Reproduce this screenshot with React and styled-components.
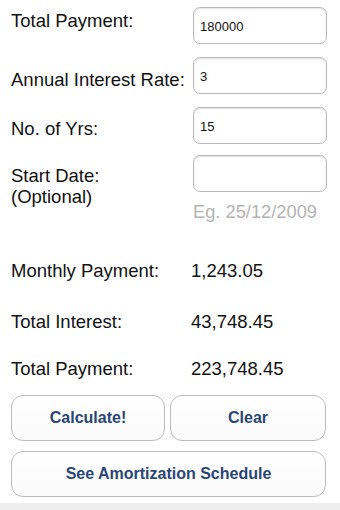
import styled, { createGlobalStyle } from 'styled-components';

const GlobalStyle = createGlobalStyle`
  html, body {
    margin: 0;
    padding: 0;
    background: #ffffff;
  }
  * {
    box-sizing: border-box;
  }
`;

const App = () => {
  return (
    <Screen>
      <GlobalStyle />
      <Form>
        <Field $labelTop={3}>
          <Label>Total Payment:</Label>
          <InputBox>
            <Input defaultValue="180000" />
          </InputBox>
        </Field>
        <Field $gap={13} $labelTop={12}>
          <Label>Annual Interest Rate:</Label>
          <InputBox>
            <Input defaultValue="3" />
          </InputBox>
        </Field>
        <Field $gap={13} $labelTop={11}>
          <Label>No. of Yrs:</Label>
          <InputBox>
            <Input defaultValue="15" />
          </InputBox>
        </Field>
        <Field $gap={11} $labelTop={10}>
          <Label>
            Start Date:
            <br />
            (Optional)
          </Label>
          <InputBox>
            <Input defaultValue="" />
            <Hint>Eg. 25/12/2009</Hint>
          </InputBox>
        </Field>
      </Form>

      <Results>
        <ResultRow>
          <ResultLabel>Monthly Payment:</ResultLabel>
          <ResultValue>1,243.05</ResultValue>
        </ResultRow>
        <ResultRow $gap={30}>
          <ResultLabel>Total Interest:</ResultLabel>
          <ResultValue>43,748.45</ResultValue>
        </ResultRow>
        <ResultRow $gap={26}>
          <ResultLabel>Total Payment:</ResultLabel>
          <ResultValue>223,748.45</ResultValue>
        </ResultRow>
      </Results>

      <Buttons>
        <Button>Calculate!</Button>
        <Button>Clear</Button>
        <Button $wide>See Amortization Schedule</Button>
      </Buttons>
      <BottomStrip />
    </Screen>
  );
};

const Screen = styled.div`
  width: 340px;
  height: 510px;
  padding: 7px 13px 0 11px;
  display: flex;
  flex-direction: column;
  background: #ffffff;
  font-family: 'Liberation Sans', Arial, sans-serif;
  color: #111111;
  overflow: hidden;
`;

const Form = styled.div`
  display: flex;
  flex-direction: column;
`;

const Field = styled.div`
  display: flex;
  align-items: flex-start;
  margin-top: ${({ $gap }) => $gap || 0}px;

  & > span {
    padding-top: ${({ $labelTop }) => $labelTop}px;
  }
`;

const Label = styled.span`
  width: 182px;
  font-size: 18.5px;
  line-height: 21px;
  white-space: nowrap;
`;

const InputBox = styled.div`
  width: 134px;
  display: flex;
  flex-direction: column;
`;

const Input = styled.input`
  width: 134px;
  height: 37px;
  border: 1.5px solid #b9b9b9;
  border-radius: 7px;
  padding: 2px 6px 0;
  font-family: 'Liberation Sans', Arial, sans-serif;
  font-size: 13px;
  color: #111111;
  background: #ffffff;
  box-shadow: inset 0 1px 2px rgba(0, 0, 0, 0.12);
  outline: none;
`;

const Hint = styled.div`
  margin-top: 9px;
  font-size: 18.3px;
  line-height: 21px;
  color: #b3b3b3;
  white-space: nowrap;
`;

const Results = styled.div`
  display: flex;
  flex-direction: column;
  margin-top: 38px;
`;

const ResultRow = styled.div`
  display: flex;
  margin-top: ${({ $gap }) => $gap || 0}px;
  font-size: 18.5px;
  line-height: 21px;
`;

const ResultLabel = styled.span`
  width: 180px;
  padding-left: 0;
  white-space: nowrap;
`;

const ResultValue = styled.span`
  white-space: nowrap;
`;

const Buttons = styled.div`
  display: grid;
  grid-template-columns: 154px 156px;
  column-gap: 5px;
  row-gap: 10px;
  margin-top: 16px;
`;

const Button = styled.button`
  grid-column: ${({ $wide }) => ($wide ? '1 / -1' : 'auto')};
  height: 46px;
  border: 1.5px solid #bcbcbc;
  border-radius: 12px;
  background: linear-gradient(#ffffff, #fafafa);
  font-family: 'Liberation Sans', Arial, sans-serif;
  font-weight: bold;
  font-size: 16px;
  color: #2a4676;
  padding: 0;
  cursor: pointer;
`;

const BottomStrip = styled.div`
  margin: auto -13px 0 -11px;
  height: 7px;
  background: #eeeeee;
`;

export default App;
